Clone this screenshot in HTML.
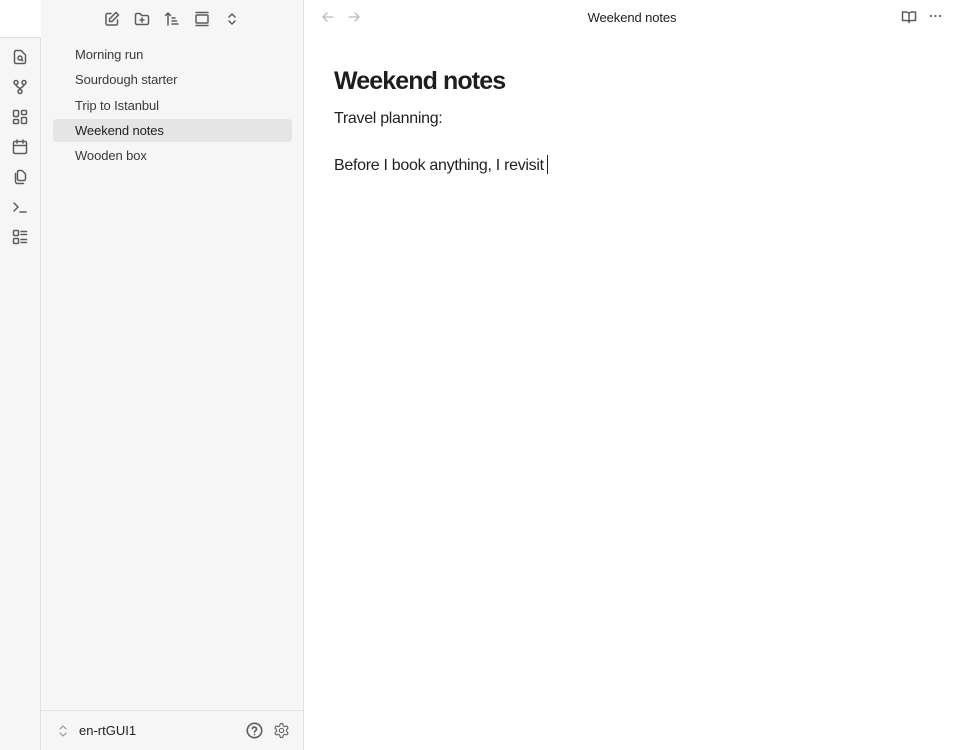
<!DOCTYPE html>
<html><head><meta charset="utf-8"><style>
*{margin:0;padding:0;box-sizing:border-box}
body{width:960px;height:750px;overflow:hidden;font-family:"Liberation Sans",sans-serif;background:#fff;position:relative}
.rib{position:absolute;left:0;top:37px;width:41px;bottom:0;background:#f6f6f6;border-right:1px solid #e0e0e0;border-top:1px solid #e0e0e0}
.side{position:absolute;left:41px;top:0;width:263px;height:750px;background:#f6f6f6;border-right:1px solid #e0e0e0}
svg{position:absolute;fill:none;stroke:#5c5c5c;stroke-width:1.5;stroke-linecap:round;stroke-linejoin:round}
.item{position:absolute;left:12px;width:239px;height:22px;font-size:13px;color:#3a3a3a;padding-left:22px;line-height:22px;letter-spacing:-0.1px}
.sel{background:#e5e5e5;border-radius:4px;color:#222}
.foot{position:absolute;left:0;top:710px;width:262px;height:40px;border-top:1px solid #e3e3e3}
.title{position:absolute;left:304px;right:0;top:10px;text-align:center;font-size:13px;color:#222;letter-spacing:-0.1px}
h1{position:absolute;left:334px;top:67px;font-size:25px;font-weight:bold;color:#1e1e1e;letter-spacing:-0.9px}
p{position:absolute;left:334px;font-size:16px;color:#222;letter-spacing:-0.3px}
</style></head><body>
<div class="rib">
<svg style="left:12px;top:11px" width="16" height="16" viewBox="0 0 16 16"><path d="M9 1.5H4a1.5 1.5 0 0 0-1.5 1.5v10A1.5 1.5 0 0 0 4 14.5h8a1.5 1.5 0 0 0 1.5-1.5V6z"/><circle cx="8" cy="9" r="2"/><path d="M9.5 10.5l1.2 1.2"/></svg>
<svg style="left:12px;top:41px" width="16" height="16" viewBox="0 0 16 16"><circle cx="4" cy="3.5" r="2"/><circle cx="12" cy="3.5" r="2"/><circle cx="8" cy="12.5" r="2"/><path d="M4 5.5c0 3 4 2.5 4 5M12 5.5c0 3-4 2.5-4 5"/></svg>
<svg style="left:12px;top:71px" width="16" height="16" viewBox="0 0 16 16"><rect x="1.5" y="1.5" width="5" height="6" rx="1"/><rect x="9.5" y="1.5" width="5" height="4" rx="1"/><rect x="1.5" y="10.5" width="5" height="4" rx="1"/><rect x="9.5" y="8.5" width="5" height="6" rx="1"/></svg>
<svg style="left:12px;top:101px" width="16" height="16" viewBox="0 0 16 16"><rect x="1.5" y="2.5" width="13" height="12" rx="1.5"/><path d="M1.5 6.5h13M5 1v3M11 1v3"/></svg>
<svg style="left:12px;top:131px" width="16" height="16" viewBox="0 0 16 16"><path d="M10 1.5H7a1.5 1.5 0 0 0-1.5 1.5v7A1.5 1.5 0 0 0 7 11.5h5a1.5 1.5 0 0 0 1.5-1.5V5z"/><path d="M3.5 4.5v8a2 2 0 0 0 2 2h6"/></svg>
<svg style="left:12px;top:161px" width="16" height="16" viewBox="0 0 16 16"><path d="M2 4l4 4-4 4M8 13h6"/></svg>
<svg style="left:12px;top:191px" width="16" height="16" viewBox="0 0 16 16"><rect x="1.5" y="1.5" width="5" height="5" rx="1"/><rect x="1.5" y="9.5" width="5" height="5" rx="1"/><path d="M9 2.5h5.5M9 5.5h5.5M9 10.5h5.5M9 13.5h5.5"/></svg>
</div>
<div class="side">
<svg style="left:63px;top:11px" width="16" height="16" viewBox="0 0 16 16"><path d="M13.5 9v3.5a1.5 1.5 0 0 1-1.5 1.5H3.5A1.5 1.5 0 0 1 2 12.5V4a1.5 1.5 0 0 1 1.5-1.5H7"/><path d="M12 1.5l2.5 2.5L8 10.5H5.5V8z"/></svg>
<svg style="left:93px;top:11px" width="16" height="16" viewBox="0 0 16 16"><path d="M1.5 4a1.5 1.5 0 0 1 1.5-1.5h3l1.5 2h5.5a1.5 1.5 0 0 1 1.5 1.5v6a1.5 1.5 0 0 1-1.5 1.5H3A1.5 1.5 0 0 1 1.5 12z"/><path d="M8 7v4M6 9h4"/></svg>
<svg style="left:123px;top:11px" width="16" height="16" viewBox="0 0 16 16"><path d="M4 14V2M1.5 4.5L4 2l2.5 2.5M8 7h3M8 10h4.5M8 13h6"/></svg>
<svg style="left:153px;top:11px" width="16" height="16" viewBox="0 0 16 16"><path d="M2 1.5h12M2 14.5h12"/><rect x="2" y="4" width="12" height="8" rx="1"/></svg>
<svg style="left:183px;top:11px" width="16" height="16" viewBox="0 0 16 16"><path d="M5 6l3-3 3 3M5 10l3 3 3-3"/></svg>
<div class="item" style="top:44px">Morning run</div>
<div class="item" style="top:69px">Sourdough starter</div>
<div class="item" style="top:95px">Trip to Istanbul</div>
<div class="item sel" style="top:119px;line-height:23px;height:23px">Weekend notes</div>
<div class="item" style="top:145px">Wooden box</div>
<div class="foot">
<svg style="left:16px;top:13px;stroke:#999;stroke-width:1.2" width="12" height="14" viewBox="0 0 12 14"><path d="M3 5l3-3 3 3M3 9l3 3 3-3"/></svg>
<div style="position:absolute;left:38px;top:12px;font-size:13px;color:#222">en-rtGUI1</div>
<svg style="left:205px;top:11px" width="17" height="17" viewBox="0 0 16 16"><circle cx="8" cy="8" r="6.8"/><path d="M6 6.2a2 2 0 0 1 3.9.6c0 1.3-1.9 1.6-1.9 2.7"/><path d="M8 11.8h.01"/></svg>
<svg style="left:232px;top:11px" width="17" height="17" viewBox="0 0 24 24"><path d="M12.2 2h-.4a2 2 0 0 0-2 2v.2a2 2 0 0 1-1 1.7l-.4.3a2 2 0 0 1-2 0l-.2-.1a2 2 0 0 0-2.7.7l-.2.4a2 2 0 0 0 .7 2.7l.2.1a2 2 0 0 1 1 1.7v.5a2 2 0 0 1-1 1.7l-.2.1a2 2 0 0 0-.7 2.7l.2.4a2 2 0 0 0 2.7.7l.2-.1a2 2 0 0 1 2 0l.4.3a2 2 0 0 1 1 1.7v.2a2 2 0 0 0 2 2h.4a2 2 0 0 0 2-2v-.2a2 2 0 0 1 1-1.7l.4-.3a2 2 0 0 1 2 0l.2.1a2 2 0 0 0 2.7-.7l.2-.4a2 2 0 0 0-.7-2.7l-.2-.1a2 2 0 0 1-1-1.7v-.5a2 2 0 0 1 1-1.7l.2-.1a2 2 0 0 0 .7-2.7l-.2-.4a2 2 0 0 0-2.7-.7l-.2.1a2 2 0 0 1-2 0l-.4-.3a2 2 0 0 1-1-1.7V4a2 2 0 0 0-2-2z"/><circle cx="12" cy="12" r="3"/></svg>
</div>
</div>
<svg style="left:321px;top:10px;stroke:#bbb;stroke-width:1.3" width="14" height="14" viewBox="0 0 14 14"><path d="M12 7H2M6 3L2 7l4 4"/></svg>
<svg style="left:347px;top:10px;stroke:#bbb;stroke-width:1.3" width="14" height="14" viewBox="0 0 14 14"><path d="M2 7h10M8 3l4 4-4 4"/></svg>
<div class="title">Weekend notes</div>
<svg style="left:901px;top:9px" width="16" height="16" viewBox="0 0 16 16"><path d="M1.5 3h4a2.5 2.5 0 0 1 2.5 2.5v8a2 2 0 0 0-2-2H1.5zM14.5 3h-4A2.5 2.5 0 0 0 8 5.5v8a2 2 0 0 1 2-2h4.5z"/></svg>
<svg style="left:929px;top:12px;fill:#666;stroke:none" width="14" height="8" viewBox="0 0 14 8"><circle cx="2" cy="4" r="1.1"/><circle cx="6.5" cy="4" r="1.1"/><circle cx="11" cy="4" r="1.1"/></svg>
<h1>Weekend notes</h1>
<p style="top:110px">Travel planning:</p>
<p style="top:155px">Before I book anything, I revisit<span style="display:inline-block;width:1px;height:19px;background:#222;vertical-align:-4px;margin-left:3px"></span></p>
</body></html>
